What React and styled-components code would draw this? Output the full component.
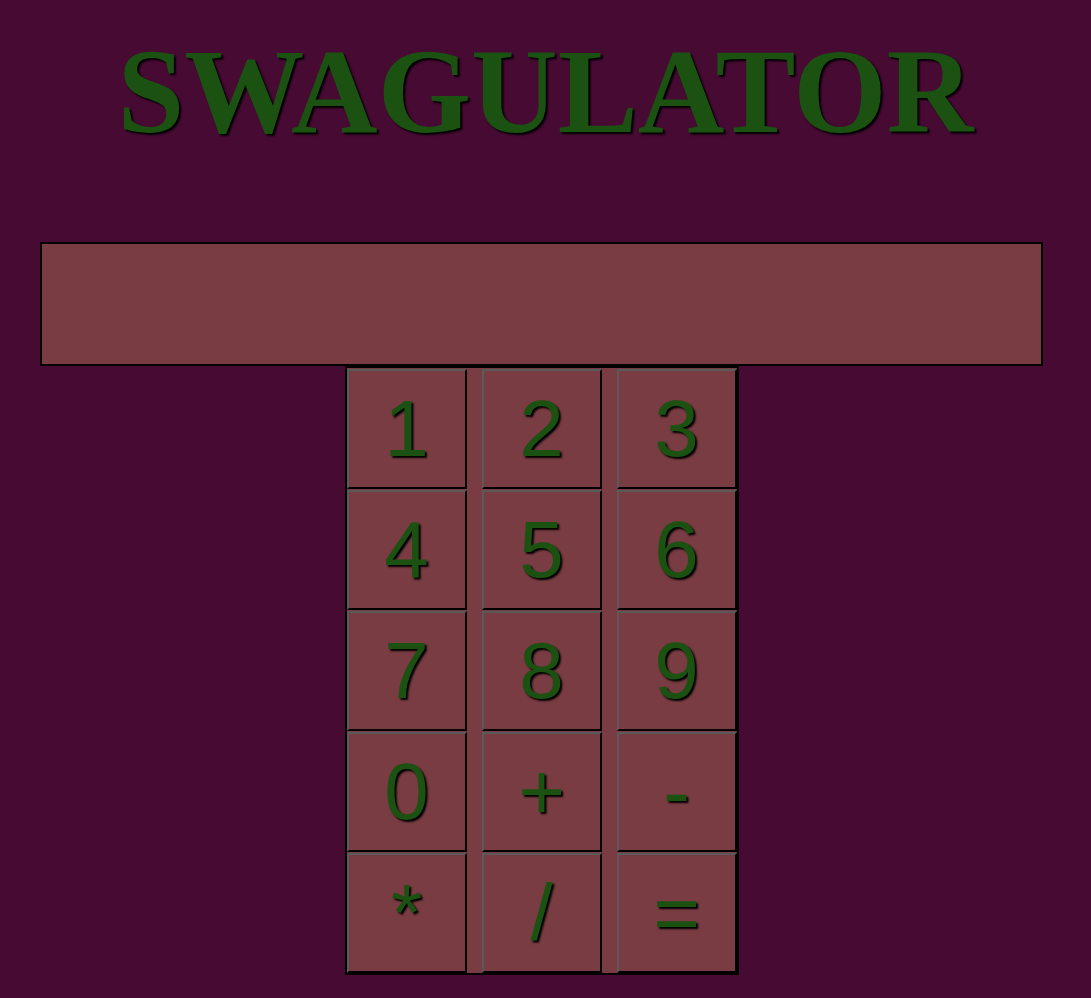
import React from "react";
import styled, { createGlobalStyle } from "styled-components";

const GlobalStyle = createGlobalStyle`
  html, body {
    margin: 0;
    padding: 0;
    background: #470a33;
  }
  body {
    font-family: "Liberation Serif", serif;
  }
`;

const Page = styled.div`
  display: flex;
  flex-direction: column;
  align-items: flex-start;
  min-height: 998px;
`;

const Title = styled.h1`
  align-self: center;
  margin: 32px 0 0;
  font-family: "Liberation Serif", "Times New Roman", serif;
  font-weight: bold;
  font-size: 120px;
  line-height: 120px;
  color: #1b5111;
  text-shadow: 2px 2px 2px #000;
`;

const Calculator = styled.div`
  margin: 90px 0 0 40px;
  width: 1003px;
  display: flex;
  flex-direction: column;
  align-items: center;
`;

const Display = styled.div`
  box-sizing: border-box;
  width: 100%;
  height: 124px;
  border: 2px solid #000;
  background: #783c42;
`;

const Keypad = styled.div`
  display: grid;
  grid-template-columns: repeat(3, 120px);
  grid-auto-rows: 120px;
  column-gap: 15px;
  row-gap: 1px;
  padding-top: 1px;
  border: 2px solid #000;
  background: #783c42;
`;

const Key = styled.button`
  box-sizing: border-box;
  width: 120px;
  height: 120px;
  margin: 0;
  padding: 0;
  border: 2px solid;
  border-color: #5a5a5a #000 #000 #5a5a5a;
  background: #783c42;
  color: #1b5111;
  font-family: "Liberation Sans", Arial, sans-serif;
  font-size: 80px;
  line-height: normal;
  text-shadow: 2px 2px 2px #000;
  cursor: pointer;
`;

const keys = ["1", "2", "3", "4", "5", "6", "7", "8", "9", "0", "+", "-", "*", "/", "="];

export default function App() {
  return (
    <>
      <GlobalStyle />
      <Page>
        <Title>SWAGULATOR</Title>
        <Calculator>
          <Display />
          <Keypad>
            {keys.map((k) => (
              <Key key={k}>{k}</Key>
            ))}
          </Keypad>
        </Calculator>
      </Page>
    </>
  );
}
